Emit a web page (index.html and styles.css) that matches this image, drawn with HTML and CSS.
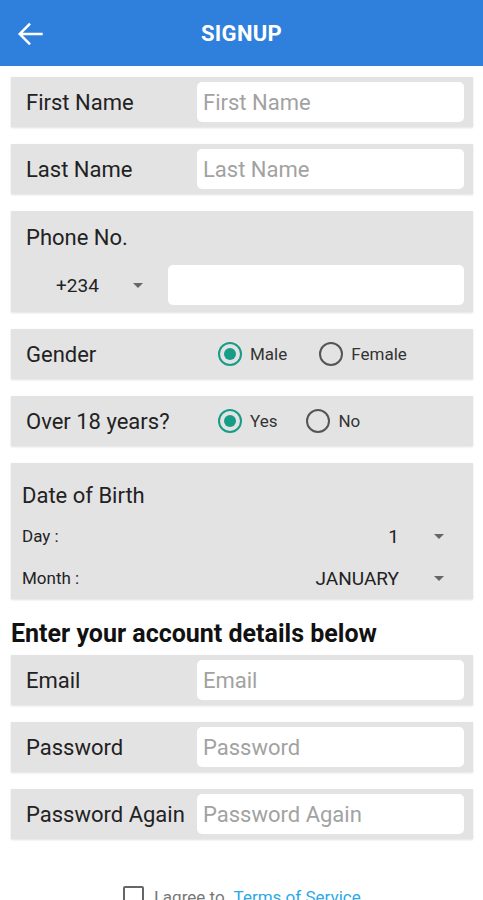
FILE: index.html
```html
<!DOCTYPE html>
<html lang="en">
<head>
    <meta charset="UTF-8">
    <meta name="viewport" content="width=device-width, initial-scale=1.0">
    <title>Signup</title>
    <link rel="stylesheet" href="styles.css">
</head>
<body>
    <!-- Top bar -->
    <header class="topbar">
        <svg class="back" viewBox="0 0 24 24" width="38" height="38">
            <path d="M20 11.2H7.4l5.2-5.2-1.1-1.1L4.4 12l7.1 7.1 1.1-1.1-5.2-5.2H20z" fill="#fff"/>
        </svg>
        <h1>SIGNUP</h1>
    </header>

    <main class="form">
        <div class="card field">
            <label>First Name</label>
            <div class="input"><span class="ph">First Name</span></div>
        </div>

        <div class="card field">
            <label>Last Name</label>
            <div class="input"><span class="ph">Last Name</span></div>
        </div>

        <div class="card phone">
            <label>Phone No.</label>
            <div class="phone-row">
                <div class="code">+234 <span class="caret"></span></div>
                <div class="input"></div>
            </div>
        </div>

        <div class="card field">
            <label>Gender</label>
            <div class="radios">
                <span class="radio on"><i></i>Male</span>
                <span class="radio gap-lg"><i></i>Female</span>
            </div>
        </div>

        <div class="card field">
            <label>Over 18 years?</label>
            <div class="radios">
                <span class="radio on"><i></i>Yes</span>
                <span class="radio gap-sm"><i></i>No</span>
            </div>
        </div>

        <div class="card dob">
            <label>Date of Birth</label>
            <div class="dob-row">
                <span>Day :</span>
                <span class="pick"><b>1</b><span class="caret"></span></span>
            </div>
            <div class="dob-row">
                <span>Month :</span>
                <span class="pick"><b>JANUARY</b><span class="caret"></span></span>
            </div>
        </div>

        <h2>Enter your account details below</h2>

        <div class="card field">
            <label>Email</label>
            <div class="input"><span class="ph">Email</span></div>
        </div>

        <div class="card field">
            <label>Password</label>
            <div class="input"><span class="ph">Password</span></div>
        </div>

        <div class="card field">
            <label>Password Again</label>
            <div class="input"><span class="ph">Password Again</span></div>
        </div>

        <div class="agree">
            <span class="box"></span>
            <span>I agree to</span>
            <a href="#">Terms of Service</a>
        </div>
    </main>
</body>
</html>
```

FILE: styles.css
```css
/* Global */
* {
    margin: 0;
    padding: 0;
    box-sizing: border-box;
}

body {
    font-family: Roboto, 'Liberation Sans', sans-serif;
    background-color: #fff;
    color: #222;
    width: 483px;
    height: 900px;
    overflow: hidden;
}

/* Top bar */
.topbar {
    height: 66px;
    background-color: #2f7fdc;
    display: flex;
    align-items: center;
    position: relative;
}

.topbar .back {
    margin-left: 11px;
    margin-top: 1px;
}

.topbar h1 {
    position: absolute;
    left: 0;
    right: 0;
    text-align: center;
    color: #fff;
    font-size: 22px;
    font-weight: bold;
    letter-spacing: 0.3px;
    pointer-events: none;
}

/* Form */
.form {
    padding: 11px 10px 0 11px;
    display: flex;
    flex-direction: column;
    gap: 17px;
}

.card {
    background-color: #e4e3e4;
    box-shadow: 0 1px 2px rgba(0, 0, 0, 0.12);
}

.card label {
    font-size: 22px;
    color: #222;
}

.field {
    height: 50px;
    display: flex;
    align-items: center;
    padding: 0 9px 0 15px;
}

.field label {
    width: 171px;
    flex-shrink: 0;
    white-space: nowrap;
}

.input {
    flex: 1;
    height: 40px;
    background-color: #fff;
    border-radius: 5px;
    display: flex;
    align-items: center;
    padding-left: 6px;
}

.ph {
    font-size: 22px;
    color: #a2a2a2;
}

/* Phone */
.phone {
    height: 101px;
    padding: 14px 9px 0 15px;
}

.phone-row {
    display: flex;
    align-items: center;
    margin-top: 15px;
}

.phone-row .code {
    width: 142px;
    padding-left: 30px;
    font-size: 19px;
    display: flex;
    align-items: center;
}

.phone-row .code .caret {
    margin-left: 34px;
}

.caret {
    display: inline-block;
    width: 0;
    height: 0;
    border-left: 5px solid transparent;
    border-right: 5px solid transparent;
    border-top: 5px solid #666;
}

/* Radios */
.radios {
    display: flex;
    align-items: center;
    padding-left: 21px;
    font-size: 17px;
    color: #333;
}

.radio {
    display: flex;
    align-items: center;
}

.radio i {
    width: 24px;
    height: 24px;
    border: 2px solid #555;
    border-radius: 50%;
    margin-right: 8px;
    display: flex;
    align-items: center;
    justify-content: center;
}

.radio.on i {
    border-color: #169c87;
}

.radio.on i::after {
    content: "";
    width: 12px;
    height: 12px;
    border-radius: 50%;
    background-color: #169c87;
}

.radio.gap-lg {
    margin-left: 32px;
}

.radio.gap-sm {
    margin-left: 29px;
}

/* Date of birth */
.dob {
    height: 136px;
    padding: 20px 0 0 11px;
}

.dob-row {
    display: flex;
    justify-content: space-between;
    align-items: center;
    font-size: 17px;
    height: 42px;
    padding-right: 29px;
}

.dob-row:first-of-type {
    margin-top: 7px;
}

.dob-row .pick {
    display: flex;
    align-items: center;
    font-size: 19px;
}

.dob-row .pick b {
    font-weight: normal;
}

.dob-row .pick .caret {
    margin-left: 35px;
}

/* Account heading */
h2 {
    font-size: 25px;
    font-weight: bold;
    color: #111;
    margin: 3px 0 -10px;
}

/* Agree */
.agree {
    margin-top: 30px;
    display: flex;
    align-items: center;
    padding-left: 112px;
    font-size: 17px;
    color: #777;
}

.agree .box {
    width: 21px;
    height: 21px;
    border: 2px solid #666;
    border-radius: 2px;
    margin-right: 10px;
}

.agree a {
    color: #2aa8e8;
    text-decoration: none;
    margin-left: 9px;
}
```
